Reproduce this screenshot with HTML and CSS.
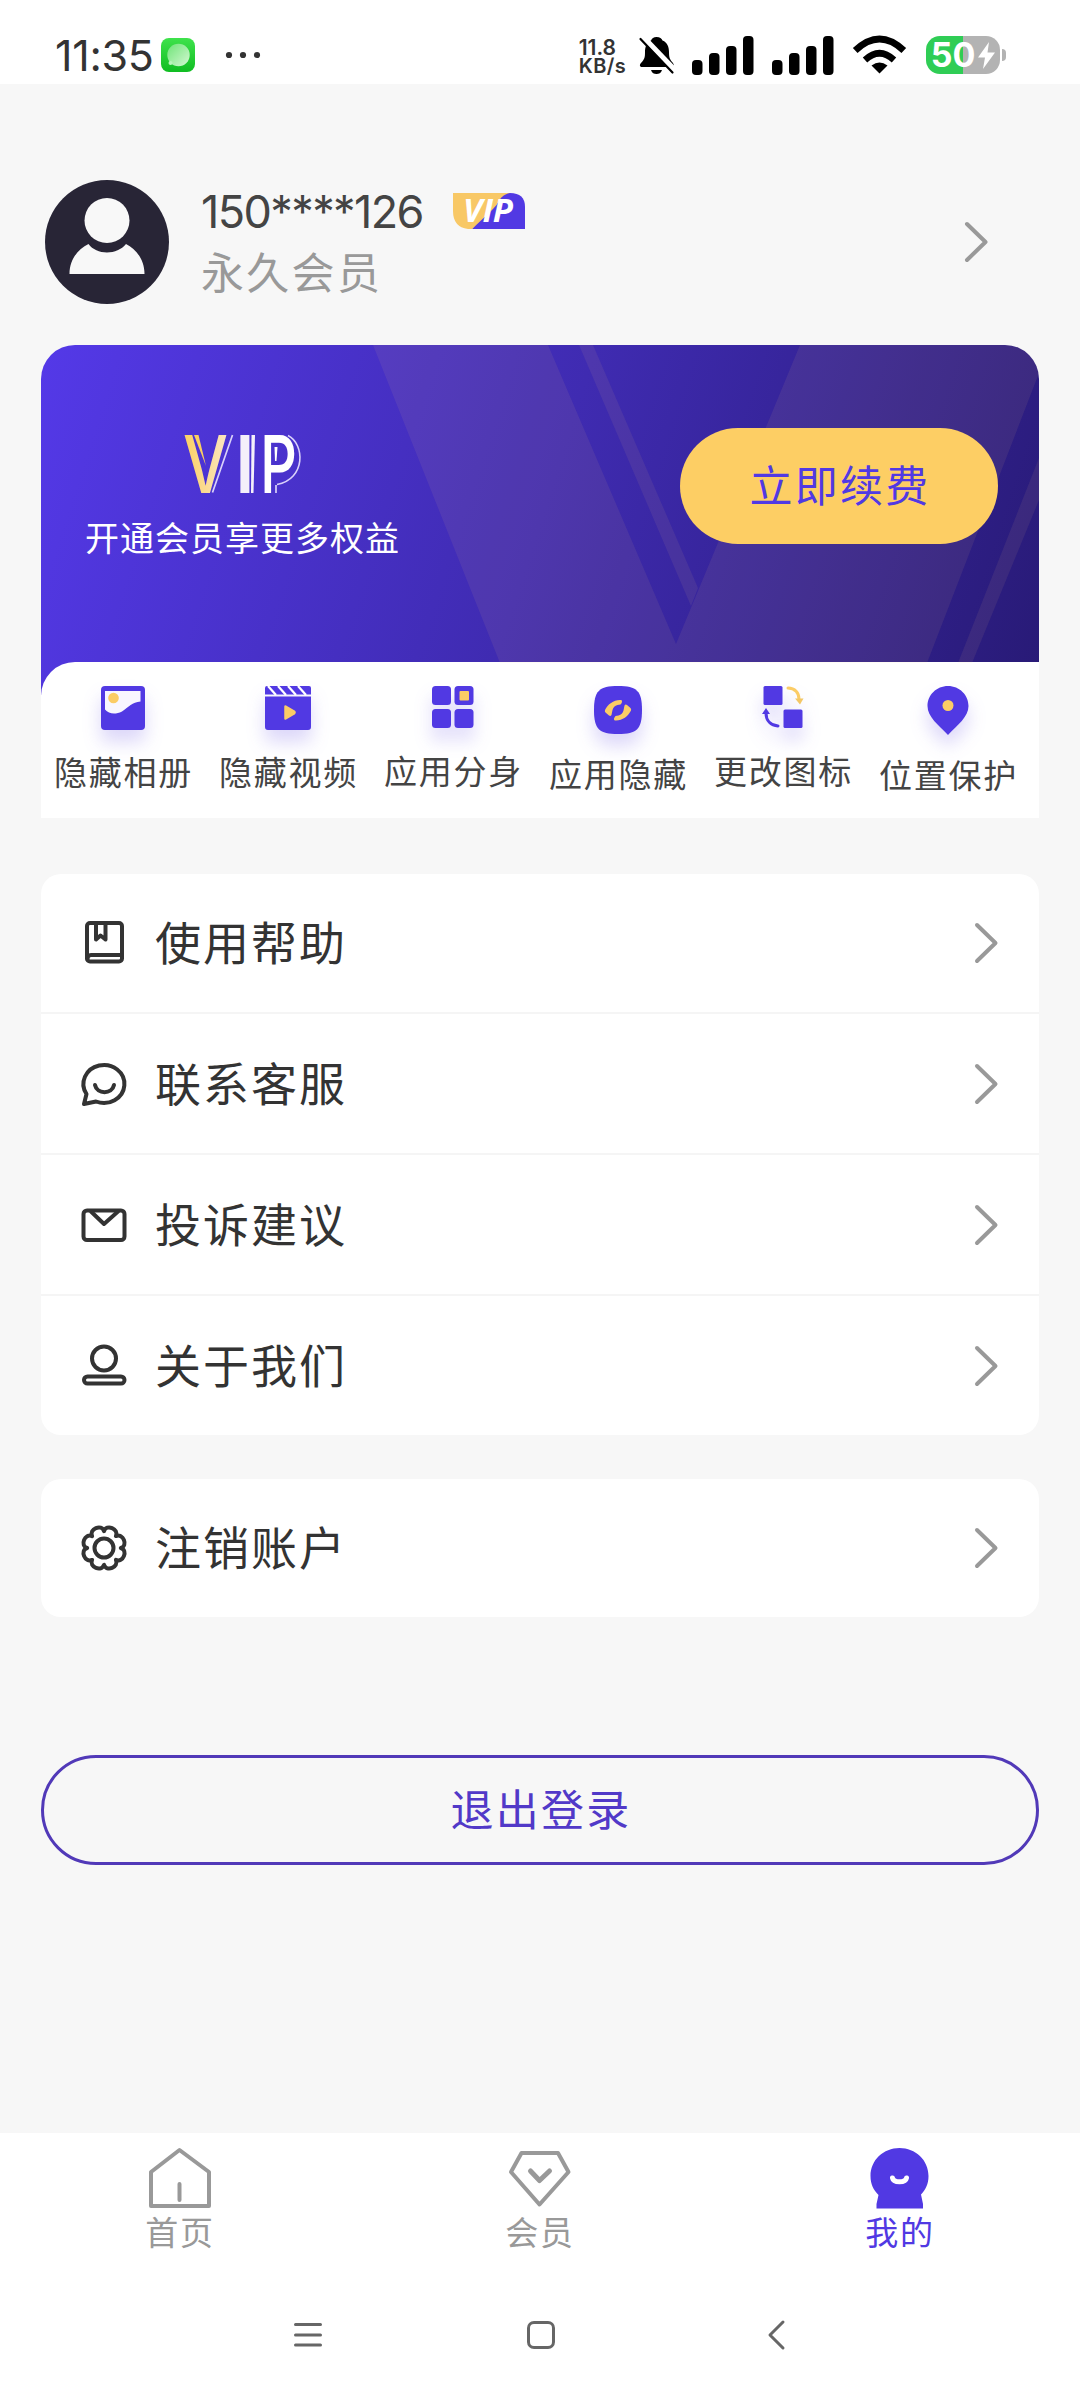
FILE: index.html
```html
<!DOCTYPE html>
<html lang="zh-CN">
<head>
<meta charset="utf-8">
<title>我的</title>
<link rel="stylesheet" href="styles.css">
</head>
<body>
<div class="screen">
  <header class="status">
    <span class="clock">11:35</span>
    <svg class="app-dot" width="34" height="34" viewBox="0 0 34 34"><defs><linearGradient id="g1" x1="0" y1="0" x2="0" y2="1"><stop offset="0" stop-color="#3fe24c"/><stop offset="1" stop-color="#10bd22"/></linearGradient><linearGradient id="g2" x1="0" y1="0" x2="1" y2="1"><stop offset="0" stop-color="#6fe478"/><stop offset="1" stop-color="#d4f8d2"/></linearGradient></defs><rect width="34" height="34" rx="8" fill="url(#g1)"/><circle cx="17.500" cy="17" r="11.200" fill="url(#g2)"/><circle cx="9.500" cy="25" r="2" fill="#b9f5bb"/></svg>
    <svg class="more" width="36" height="8" viewBox="0 0 36 8" fill="#333"><circle cx="4" cy="4" r="3.100"/><circle cx="18" cy="4" r="3.100"/><circle cx="32" cy="4" r="3.100"/></svg>
    <span class="speed"><span class="rate">11.8</span><span class="unit">KB/s</span></span>
    <svg class="bell" width="36" height="38" viewBox="0 0 36 38"><path d="M17.500 1c3.500 0 5 1.500 6 3.500 5 2 6.500 6.500 6.500 11.500 0 6 1 7.500 4 11 1.500 2.500 1 4-1 4H3c-2 0-3-2-1-4 3.500-4 4-5 4-11 0-5 1.500-9.500 6-11.500 1-2 2.500-3.500 5.500-3.500zM12 34h11c-1 3-3 4-5.500 4S13 37 12 34z" fill="#000"/><path d="M3 0L36 34.500" stroke="#fff" stroke-width="5.500"/><path d="M1.500 3L33.500 36.500" stroke="#000" stroke-width="2.200" stroke-linecap="round"/></svg>
    <svg class="bars bars-a" width="62" height="39" viewBox="0 0 62 39"><rect y="24" width="10.500" height="15" rx="4"/><rect x="17" y="17" width="10.500" height="22" rx="4"/><rect x="34" y="10" width="10.500" height="29" rx="4"/><rect x="51" width="10.500" height="39" rx="4"/></svg>
    <svg class="bars bars-b" width="62" height="39" viewBox="0 0 62 39"><rect y="24" width="10.500" height="15" rx="4"/><rect x="17" y="17" width="10.500" height="22" rx="4"/><rect x="34" y="10" width="10.500" height="29" rx="4"/><rect x="51" width="10.500" height="39" rx="4"/></svg>
    <svg class="wifi" width="53" height="38" viewBox="0 0 53 38" fill="none" stroke="#000"><path d="M2.200 14.500Q26.500-8.500 50.800 14.500" stroke-width="6.800"/><path d="M12 24Q26.500 10.500 41 24" stroke-width="6.500"/><path d="M18.500 29.500Q26.500 23.500 34.500 29.500L26.500 37.500z" fill="#000" stroke="none"/></svg>
    <span class="battery">
      <span class="cell"><span class="level">50</span><svg width="17" height="27" viewBox="0 0 17 27"><path d="M11 0L0 15.500h7L5 27 17 10.500H9.500z" fill="#fff"/></svg></span>
      <span class="nub"></span>
    </span>
  </header>

  <section class="profile">
    <svg width="124" height="124" viewBox="0 0 124 124"><circle cx="62" cy="62" r="62" fill="#282536"/><circle cx="62" cy="40.500" r="22.500" fill="#f8f8f8"/><path d="M43.500 64c4 5.500 11 8.500 18.500 8.500S76.500 69.500 81 64c10 5 18.500 15.500 18.500 30H24.500C24.500 79.500 33 69 43.500 64z" fill="#f8f8f8"/></svg>
    <div class="who">
      <div class="line"><span class="phone">150****126</span>
        <svg class="badge" width="72" height="36" viewBox="0 0 72 36"><path d="M19 36L48 0H57Q72 0 72 14V36z" fill="#5139e3"/><path d="M0 0H57C45 3 48 9 39 17L19 36H15Q0 34 0 18z" fill="#f8c866"/><text x="10" y="29" textLength="50" class="badge-text">VIP</text></svg>
      </div>
      <div class="level-name">永久会员</div>
    </div>
    <svg class="chev" width="24" height="42" viewBox="0 0 24 42"><path d="M3 3L21.500 21 3 39"/></svg>
  </section>

  <section class="vip">
    <div class="banner">
      <svg class="rays" width="998" height="350" viewBox="0 0 998 350" fill="#ffd280" fill-opacity=".08"><path d="M332 0H507L635 299 759 0H998V28L886 318H459z"/><path d="M538 0H552L657 243 650 261z"/><path d="M998 113V155L931 318H917z"/></svg>
      <div class="pitch">
        <svg class="logo" width="118" height="58" viewBox="0 0 118 58">
          <defs><linearGradient id="gold" x1="0" y1="0" x2="1" y2="0"><stop offset="0" stop-color="#fbd060"/><stop offset="1" stop-color="#fbe6c4"/></linearGradient></defs>
          <g class="logo-text"><text x="-1" y="58" textLength="45" lengthAdjust="spacingAndGlyphs" fill="url(#gold)">V</text><text x="50" y="58" fill="#f4f0fa">I</text><text x="76" y="58" textLength="37" lengthAdjust="spacingAndGlyphs" fill="#fff">P</text></g>
          <path d="M10 0h4.500l7.500 31z" fill="#fbd060"/>
          <path d="M48.500 0L28.500 57.500M92 50v8" stroke="#d9d0fa" stroke-width="1.700"/>
          <path d="M67.500 0h3.500l-1.500 58h-2.500z" fill="#f4f0fa"/><path d="M90.500 12h3l-1 14h-1.500z" fill="#fff"/>
          <path d="M104 .500C121 9 122 44 93 49.500" fill="none" stroke="#d9d0fa" stroke-width="1.600"/>
        </svg>
        <div class="slogan">开通会员享更多权益</div>
      </div>
      <div class="renew">立即续费</div>
    </div>
    <div class="features">
      <div class="feature"><svg width="70" height="44" viewBox="-13 0 70 44"><rect width="44" height="44" rx="4" fill="#5139e3"/><path d="M4 5H39.500V15.500C31 16 28 21 21 25.500 14 29 8 28 4 23.500z" fill="#f8f6ff"/><circle cx="12.500" cy="12" r="5.300" fill="#fbcc66"/></svg><span>隐藏相册</span></div>
      <div class="feature"><svg width="70" height="44" viewBox="-12 0 70 44"><path d="M2 0H44Q46 0 46 2V8.500H0V2Q0 0 2 0zM0 10.500H46V41Q46 44 43 44H3Q0 44 0 41z" fill="#5139e3"/><path d="M3 0L11 9M13 0L21 9M23 0L31 9M33 0L41 9" stroke="#fff" stroke-width="2.200"/><path d="M20.500 20.500L29 25.500Q30 26.500 29 27.500L20.500 32.500z" fill="#fbcc66" stroke="#fbcc66" stroke-width="2.500" stroke-linejoin="round"/></svg><span>隐藏视频</span></div>
      <div class="feature low"><svg width="70" height="43" viewBox="-14 0 70 43"><g fill="#5139e3"><rect width="19" height="19" rx="3.500"/><rect x="22.500" width="19" height="19" rx="3.500"/><rect y="23" width="19" height="19" rx="3.500"/><rect x="22.500" y="23" width="19" height="19" rx="3.500"/></g><rect x="27.500" y="5" width="9.500" height="9.500" rx="1" fill="#fbcc66"/></svg><span>应用分身</span></div>
      <div class="feature"><svg width="70" height="46" viewBox="-11 0 70 46"><path d="M24 0C43 0 48 5 48 24S43 48 24 48 0 43 0 24 5 0 24 0z" fill="#5139e3"/><path d="M27 14C20 13.500 14 18 11 24q-.500 1.500 .500 2.500l3.500 3q1.500 1 2.500-.500l1-5q1-4 5-5l3-.500q1-1 1.500-2.500 .300-1.800-1-2zM21 34.500c7 .500 13-4 16-10q.500-1.500-.500-2.500l-3.500-3q-1.500-1-2.500 .500l-1 5q-1 4-5 5l-3 .500q-1 1-1.500 2.500-.300 1.800 1 2z" fill="#fbcc66"/></svg><span>应用隐藏</span></div>
      <div class="feature low"><svg width="70" height="43" viewBox="-15 0 70 43"><g fill="#5139e3"><rect x=".500" width="19" height="19" rx="1.500"/><rect x="20.500" y="23.500" width="19" height="18.500" rx="1.500"/><path d="M-1 28L3 22 7 28z"/></g><path d="M3 27C3 35 8 39.500 15 40" fill="none" stroke="#5139e3" stroke-width="3" stroke-linecap="round"/><path d="M25 2C32 2 36 7 36 13" fill="none" stroke="#fbcc66" stroke-width="3" stroke-linecap="round"/><path d="M32 12.500H40.500L37 18.500z" fill="#f4c765"/></svg><span>更改图标</span></div>
      <div class="feature"><svg width="70" height="47" viewBox="-14.500 0 70 47"><path d="M20.500 0C32 0 41 9 41 20 41 31 30 39 20.500 49 11 39 0 31 0 20 0 9 9 0 20.500 0z" fill="#5139e3"/><circle cx="20.500" cy="19.500" r="5.500" fill="#fbcc66"/></svg><span>位置保护</span></div>
    </div>
  </section>

  <nav class="menu">
    <div class="row"><svg width="46" height="46" viewBox="0 0 46 46"><rect x="6" y="3" width="35" height="38.500" rx="3"/><path d="M15 4V19.500L19.500 15.500 24.500 19.500V4M6.500 39Q6.500 35 10 35H40"/></svg><span>使用帮助</span><svg class="chev" width="24" height="42" viewBox="0 0 24 42"><path d="M3 3L21.500 21 3 39"/></svg></div>
    <div class="row"><svg width="46" height="46" viewBox="0 0 46 46"><path d="M3 43L5.500 33A20.500 19 0 1 1 15 40.500z"/><path d="M14 24C16 33.500 31 33.500 33 24"/></svg><span>联系客服</span><svg class="chev" width="24" height="42" viewBox="0 0 24 42"><path d="M3 3L21.500 21 3 39"/></svg></div>
    <div class="row"><svg width="46" height="46" viewBox="0 0 46 46"><rect x="2.500" y="8.500" width="41" height="29.500" rx="3.500"/><path d="M10 9.500L23 22 37 9.500"/></svg><span>投诉建议</span><svg class="chev" width="24" height="42" viewBox="0 0 24 42"><path d="M3 3L21.500 21 3 39"/></svg></div>
    <div class="row"><svg width="46" height="46" viewBox="0 0 46 46"><circle cx="23" cy="15.500" r="12"/><rect x="3" y="33.500" width="40.500" height="7" rx="3.500"/></svg><span>关于我们</span><svg class="chev" width="24" height="42" viewBox="0 0 24 42"><path d="M3 3L21.500 21 3 39"/></svg></div>
  </nav>

  <nav class="menu account">
    <div class="row"><svg width="46" height="46" viewBox="-23 -23 46 46"><defs><path id="lobes" d="M16.500 0C23.500 2 20.500 15 11.700 11.700 15 20.500 2 23.500 0 16.500"/></defs><path d="M16.800 0C24.500 2.200 19.100 15.400 11.900 11.900 15.400 19.100 2.200 24.500 0 16.800-2.200 24.500-15.400 19.100-11.900 11.900-19.100 15.400-24.500 2.200-16.800 0-24.500-2.200-19.100-15.400-11.900-11.900-15.400-19.100-2.200-24.500 0-16.800 2.200-24.500 15.400-19.100 11.900-11.900 19.100-15.400 24.500-2.200 16.800 0z"/><circle r="9.500"/></svg><span>注销账户</span><svg class="chev" width="24" height="42" viewBox="0 0 24 42"><path d="M3 3L21.500 21 3 39"/></svg></div>
  </nav>

  <div class="logout">退出登录</div>

  <footer class="bottom">
    <div class="tabs">
      <div class="tab"><svg width="66" height="62" viewBox="0 0 66 62"><path d="M32.500 3L62 25V59H4V25zM32.500 37V53"/></svg><span>首页</span></div>
      <div class="tab"><svg width="66" height="62" viewBox="0 0 66 62"><path d="M14.500 6H51L61.500 25 32.500 57.500 4 25z"/><path d="M23.500 24L32.500 33.500 42.500 24" stroke-width="5"/></svg><span>会员</span></div>
      <div class="tab active"><svg width="66" height="62" viewBox="0 0 66 62"><path class="solid" d="M32.500 1C48.500 1 61.500 13 61.500 29 61.500 37 58.500 43 54 47.500L56 57V61.500H9.500V57L11.500 48C6.500 43 3.500 37 3.500 29 3.500 13 16.500 1 32.500 1z"/><path class="smile" d="M25.500 31C26.500 36 38.500 36 39.500 31"/></svg><span>我的</span></div>
    </div>
    <div class="keys">
      <svg width="28" height="28" viewBox="0 0 28 28"><path d="M1.500 3.500H26.500M1.500 14H26.500M1.500 24H26.500"/></svg>
      <svg width="28" height="28" viewBox="0 0 28 28"><rect x=".500" y="1.500" width="25" height="25" rx="5.500"/></svg>
      <svg width="28" height="28" viewBox="0 0 28 28"><path d="M21 1L8 14 21 27"/></svg>
    </div>
  </footer>
</div>
</body>
</html>
```
FILE: styles.css
```css
* { box-sizing: border-box; }
body {
  margin: 0;
  background: #f7f7f7;
  font-family: "Noto Sans CJK SC", "Noto Sans", sans-serif;
  color: #333;
}
svg { display: block; flex: none; overflow: visible; }
.screen {
  width: 1080px;
  height: 2400px;
  display: flex;
  flex-direction: column;
  background: #f7f7f7;
  overflow: hidden;
}

/* status bar */
.status {
  height: 84px;
  flex: none;
  display: flex;
  align-items: center;
  padding: 26px 74px 0 55px;
  background: #fff;
  font-family: Inter, sans-serif;
}
.clock { width: 107px; font-size: 43px; line-height: 56px; letter-spacing: -.3px; white-space: nowrap; }
.more { margin-left: 30px; }
.speed {
  margin-left: 318px;
  width: 61px;
  display: flex;
  flex-direction: column;
  padding-top: 3px;
  font-weight: 600;
  line-height: 19px;
}
.rate { font-size: 21px; }
.unit { font-size: 20px; letter-spacing: .4px; }
.bars-a { margin-left: 17px; }
.bars-b { margin-left: 18px; }
.wifi { margin-left: 19px; }
.battery { margin-left: 20px; display: flex; align-items: center; gap: 2px; }
.cell {
  width: 74px;
  height: 38px;
  border-radius: 14px;
  display: flex;
  align-items: center;
  justify-content: center;
  gap: 3px;
  background: linear-gradient(90deg, #2fcd55 50%, #b3b3b3 50%);
  color: #fff;
  font-weight: 700;
  font-size: 34px;
}
.level { line-height: 38px; }
.nub { width: 4px; height: 12px; border-radius: 0 4px 4px 0; background: #b3b3b3; }

/* profile */
.profile {
  height: 261px;
  flex: none;
  display: flex;
  align-items: flex-start;
  padding: 96px 92px 0 45px;
}
.who { flex: 1; padding: 0 0 0 32px; }
.line { display: flex; align-items: center; height: 62px; }
.phone { width: 252px; font-family: Inter, sans-serif; font-size: 45px; letter-spacing: -1.6px; color: #444; }
.badge-text { font: italic 700 33px "Open Sans", sans-serif; fill: #fff; }
.level-name { font-size: 43px; letter-spacing: 2.3px; line-height: 56px; color: #999; }
.chev { fill: none; stroke: #999; stroke-width: 4; stroke-linecap: round; stroke-linejoin: round; }
.profile .chev { margin-top: 41px; }

/* membership card */
.vip {
  width: 998px;
  height: 473px;
  flex: none;
  margin-left: 41px;
  border-radius: 34px 34px 0 0;
  overflow: hidden;
  background: linear-gradient(108deg, #5439e8, #3f2bb1 50%, #281a76) 0 0 / 998px 350px no-repeat;
}
.banner {
  position: relative;
  height: 317px;
  display: flex;
  align-items: flex-start;
  justify-content: space-between;
  padding: 83px 41px 0 44px;
}
.rays { position: absolute; left: 0; top: 0; }
.pitch, .renew { position: relative; }
.pitch { display: flex; flex-direction: column; align-items: center; padding-top: 7px; }
.logo-text { font: 500 80px Inter, sans-serif; }
.slogan { margin-top: 20px; font-size: 34px; letter-spacing: 1px; line-height: 48px; color: #fff; }
.renew {
  width: 318px;
  height: 116px;
  border-radius: 58px;
  background: #fdce64;
  color: #5139e3;
  font-size: 43px;
  letter-spacing: 2.3px;
  line-height: 111px;
  padding-left: 2px;
  text-align: center;
}
.features {
  height: 156px;
  display: grid;
  grid-template-columns: repeat(6, 165px);
  padding-top: 24px;
  border-radius: 34px 0 0 0;
  background: #fff;
}
.feature { display: flex; flex-direction: column; align-items: center; gap: 17px; margin-left: -2px; }
.feature svg { filter: drop-shadow(0 12px 9px rgba(81, 57, 227, .2)); }
.feature span { font-size: 33px; letter-spacing: 1.7px; line-height: 48px; margin-right: -2px; color: #444; }

/* menu cards */
.menu { width: 998px; flex: none; margin: 56px 0 0 41px; border-radius: 20px; background: #fff; overflow: hidden; }
.row { height: 141px; display: flex; align-items: center; padding: 0 41px 0 40px; }
.row + .row { border-top: 2px solid #f5f5f5; }
.row:first-child { height: 138px; }
.row > svg:first-child { fill: none; stroke: #333; stroke-width: 4; stroke-linejoin: round; stroke-linecap: round; }
.row span { flex: 1; margin-left: 28px; padding-bottom: 6px; font-size: 46px; letter-spacing: 2px; line-height: 66px; }
.account { margin-top: 44px; }

.logout {
  width: 998px;
  height: 110px;
  flex: none;
  margin: 138px 0 0 41px;
  border: 3px solid #5139b8;
  border-radius: 55px;
  color: #5139c8;
  font-size: 43px;
  letter-spacing: 2.3px;
  line-height: 99px;
  padding-left: 2px;
  text-align: center;
}

/* bottom bars */
.bottom { margin-top: auto; height: 267px; flex: none; background: #fff; }
.tabs { display: grid; grid-template-columns: repeat(3, 360px); height: 154px; padding-top: 14px; }
.tab { display: flex; flex-direction: column; align-items: center; color: #999; }
.tab svg { fill: none; stroke: #999; stroke-width: 4; stroke-linejoin: round; stroke-linecap: round; }
.tab span { font-size: 33px; letter-spacing: 1.7px; line-height: 44px; }
.active { color: #5139e3; }
.active .solid { fill: #5139e3; stroke: none; }
.active .smile { stroke: #fff; stroke-width: 5; }
.keys { display: flex; justify-content: space-between; padding: 34px 290px 0 294px; }
.keys svg { fill: none; stroke: #666; stroke-width: 3; stroke-linecap: round; stroke-linejoin: round; }
```
